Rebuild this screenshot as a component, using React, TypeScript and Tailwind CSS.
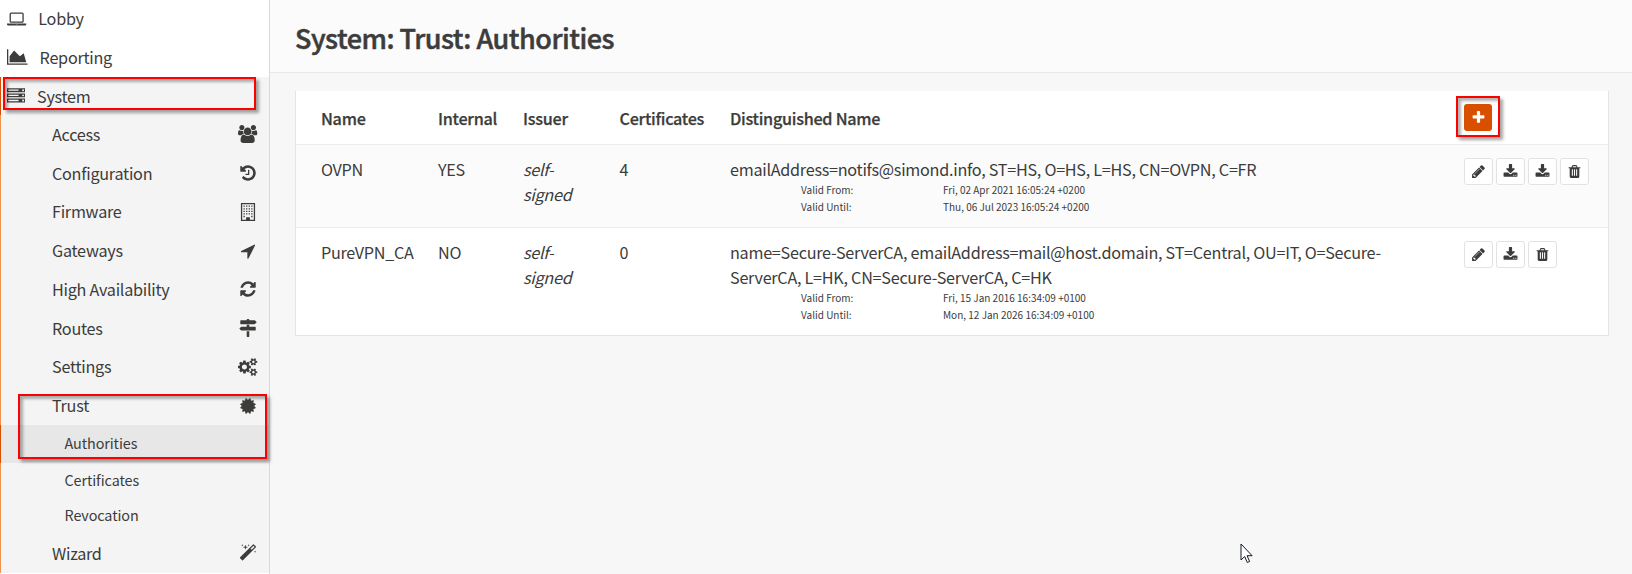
import type { ReactNode } from 'react';

type Glyph = { w: number; d: string };

const glyphs: Record<string, Glyph> = {
  laptop: { w: 1920, d: 'M416 1280q-66 0-113-47t-47-113v-704q0-66 47-113t113-47h1088q66 0 113 47t47 113v704q0 66-47 113t-113 47h-1088zm-32-864v704q0 13 9.500 22.500t22.500 9.500h1088q13 0 22.500-9.500t9.500-22.500v-704q0-13-9.500-22.500t-22.500-9.500h-1088q-13 0-22.500 9.500t-9.500 22.500zm1376 928h160v96q0 40-47 68t-113 28h-1600q-66 0-113-28t-47-68v-96h1760zm-720 96q16 0 16-16t-16-16h-160q-16 0-16 16t16 16h160z' },
  chart: { w: 2048, d: 'M2048 1536v128h-2048v-1536h128v1408h1920zm-384-1024l256 896h-1664v-576l448-576 576 576z' },
  server: { w: 1792, d: 'M128 1408h1024v-128h-1024v128zm0-512h1024v-128h-1024v128zm1568 448q0-40-28-68t-68-28-68 28-28 68 28 68 68 28 68-28 28-68zm-1568-960h1024v-128h-1024v128zm1568 448q0-40-28-68t-68-28-68 28-28 68 28 68 68 28 68-28 28-68zm0-512q0-40-28-68t-68-28-68 28-28 68 28 68 68 28 68-28 28-68zm96 832v384h-1792v-384h1792zm0-512v384h-1792v-384h1792zm0-512v384h-1792v-384h1792z' },
  users: { w: 1920, d: 'M593 896q-162 5-265 128h-134q-82 0-138-40.500t-56-118.500q0-353 124-353 6 0 43.500 21t97.500 42.500 119 21.500q67 0 133-23-5 37-5 66 0 139 81 256zm1071 637q0 120-73 189.500t-194 69.500h-874q-121 0-194-69.500t-73-189.500q0-53 3.500-103.500t14-109 26.500-108.500 43-97.500 62-81 85.500-53.500 111.500-20q10 0 43 21.500t73 48 107 48 135 21.500 135-21.500 107-48 73-48 43-21.500q61 0 111.500 20t85.500 53.500 62 81 43 97.500 26.500 108.500 14 109 3.500 103.500zm-1024-1277q0 106-75 181t-181 75-181-75-75-181 75-181 181-75 181 75 75 181zm704 384q0 159-112.500 271.500t-271.500 112.500-271.500-112.500-112.500-271.500 112.500-271.500 271.500-112.500 271.500 112.500 112.500 271.500zm576 225q0 78-56 118.500t-138 40.500h-134q-103-123-265-128 81-117 81-256 0-29-5-66 66 23 133 23 59 0 119-21.500t97.500-42.500 43.500-21q124 0 124 353zm-128-609q0 106-75 181t-181 75-181-75-75-181 75-181 181-75 181 75 75 181z' },
  history: { w: 1792, d: 'M1664 896q0 156-61 298t-164 245-245 164-298 61q-172 0-327-72.500t-264-204.500q-7-10-6.500-22.500t8.500-20.500l137-138q10-9 25-9 16 2 23 12 73 95 179 147t225 52q104 0 198.500-40.500t163.500-109.500 109.500-163.500 40.500-198.500-40.500-198.500-109.500-163.500-163.500-109.500-198.500-40.500q-98 0-188 35.500t-160 101.500l137 138q31 30 14 69-17 40-59 40h-448q-26 0-45-19t-19-45v-448q0-42 40-59 39-17 69 14l130 129q107-101 244.500-156.500t284.500-55.500q156 0 298 61t245 164 164 245 61 298zm-640-288v448q0 14-9 23t-23 9h-320q-14 0-23-9t-9-23v-64q0-14 9-23t23-9h224v-352q0-14 9-23t23-9h64q14 0 23 9t9 23z' },
  building: { w: 1792, d: 'M192 0h1408v1792h-1408zm128 128v1536h384v-256h384v256h384v-1536zM448 256h128v128h-128zm256 0h128v128h-128zm256 0h128v128h-128zm256 0h128v128h-128zM448 512h128v128h-128zm256 0h128v128h-128zm256 0h128v128h-128zm256 0h128v128h-128zM448 768h128v128h-128zm256 0h128v128h-128zm256 0h128v128h-128zm256 0h128v128h-128zM448 1024h128v128h-128zm256 0h128v128h-128zm256 0h128v128h-128zm256 0h128v128h-128zM448 1280h128v128h-128zm768 0h128v128h-128z' },
  arrow: { w: 1792, d: 'M1593 349l-640 1280q-17 35-57 35-5 0-15-2-22-5-35.500-22.500t-13.500-39.500v-576h-576q-22 0-39.500-13.500t-22.500-35.500 4-42 29-30l1280-640q13-7 29-7 27 0 45 19 15 14 18.500 34.500t-6.500 39.500z' },
  refresh: { w: 1792, d: 'M1639 1056q0 5-1 7-64 268-268 434.500t-478 166.500q-146 0-282.500-55t-243.500-157l-129 129q-19 19-45 19t-45-19-19-45v-448q0-26 19-45t45-19h448q26 0 45 19t19 45-19 45l-137 137q71 66 161 102t187 36q134 0 250-65t186-179q11-17 53-117 8-23 30-23h192q13 0 22.500 9.500t9.500 22.500zm25-800v448q0 26-19 45t-45 19h-448q-26 0-45-19t-19-45 19-45l138-138q-148-137-349-137-134 0-250 65t-186 179q-11 17-53 117-8 23-30 23h-199q-13 0-22.500-9.500t-9.500-22.500v-7q65-268 270-434.500t480-166.500q146 0 284 55.500t245 156.500l130-129q19-19 45-19t45 19 19 45z' },
  signs: { w: 1792, d: 'M1745 297q10 10 10 23t-10 23l-141 141q-28 28-68 28h-1344q-26 0-45-19t-19-45v-256q0-26 19-45t45-19h576v-64q0-26 19-45t45-19h128q26 0 45 19t19 45v64h512q40 0 68 28zm-977 919h256v512q0 26-19 45t-45 19h-128q-26 0-45-19t-19-45v-512zm832-448q26 0 45 19t19 45v256q0 26-19 45t-45 19h-1344q-40 0-68-28l-141-141q-10-10-10-23t10-23l141-141q28-28 68-28h512v-192h256v192h576z' },
  cogs: { w: 1920, d: 'M896 896q0-106-75-181t-181-75-181 75-75 181 75 181 181 75 181-75 75-181zm768 512q0-52-38-90t-90-38-90 38-38 90q0 53 37.500 90.500t90.500 37.500 90.500-37.500 37.500-90.500zm0-1024q0-52-38-90t-90-38-90 38-38 90q0 53 37.500 90.500t90.500 37.500 90.500-37.500 37.500-90.500zm-384 421v185q0 10-7 19.500t-16 10.500l-155 24q-11 35-32 76 34 48 90 115 7 11 7 20 0 12-7 19-23 30-82.500 89.500t-78.500 59.500q-11 0-21-7l-115-90q-37 19-77 31-11 108-23 155-7 24-30 24h-186q-11 0-20-7.500t-10-17.500l-23-153q-34-10-75-31l-118 89q-7 7-20 7-11 0-21-8-144-133-144-160 0-9 7-19 10-14 41-53t47-61q-23-44-35-82l-152-24q-10-1-17-9.500t-7-19.500v-185q0-10 7-19.500t16-10.500l155-24q11-35 32-76-34-48-90-115-7-11-7-20 0-12 7-20 22-30 82-89t79-59q11 0 21 7l115 90q34-18 77-32 11-108 23-154 7-24 30-24h186q11 0 20 7.500t10 17.500l23 153q34 10 75 31l118-89q8-7 20-7 11 0 21 8 144 133 144 160 0 8-7 19-12 16-42 54t-45 60q23 48 34 82l152 23q10 2 17 10.500t7 19.500zm640 533v140q0 16-149 31-12 27-30 52 51 113 51 138 0 4-4 7-122 71-124 71-8 0-46-47t-52-68q-20 2-30 2t-30-2q-14 21-52 68t-46 47q-2 0-124-71-4-3-4-7 0-25 51-138-18-25-30-52-149-15-149-31v-140q0-16 149-31 13-29 30-52-51-113-51-138 0-4 4-7 4-2 35-20t59-34 30-16q8 0 46 46.500t52 67.500q20-2 30-2t30 2q51-71 92-112l6-2q4 0 124 70 4 3 4 7 0 25-51 138 17 23 30 52 149 15 149 31zm0-1024v140q0 16-149 31-12 27-30 52 51 113 51 138 0 4-4 7-122 71-124 71-8 0-46-47t-52-68q-20 2-30 2t-30-2q-14 21-52 68t-46 47q-2 0-124-71-4-3-4-7 0-25 51-138-18-25-30-52-149-15-149-31v-140q0-16 149-31 13-29 30-52-51-113-51-138 0-4 4-7 4-2 35-20t59-34 30-16q8 0 46 46.500t52 67.500q20-2 30-2t30 2q51-71 92-112l6-2q4 0 124 70 4 3 4 7 0 25-51 138 17 23 30 52 149 15 149 31z' },
  certificate: { w: 1792, d: 'M1504 896l138 135q30 28 20 70-12 41-52 51l-188 48 53 186q12 41-19 70-29 31-70 19l-186-53-48 188q-10 40-51 52-12 2-19 2-31 0-51-22l-135-138-135 138q-28 30-70 20-41-11-51-52l-48-188-186 53q-41 12-70-19-31-29-19-70l53-186-188-48q-40-10-52-51-10-42 20-70l138-135-138-135q-30-28-20-70 12-41 52-51l188-48-53-186q-12-41 19-70 29-31 70-19l186 53 48-188q10-41 51-51 41-12 70 19l135 139 135-139q29-30 70-19 41 10 51 51l48 188 186-53q41-12 70 19 31 29 19 70l-53 186 188 48q40 10 52 51 10 42-20 70z' },
  magic: { w: 1792, d: 'M1254 581l293-293-107-107-293 293zm447-293q0 27-18 45l-1286 1286q-18 18-45 18t-45-18l-198-198q-18-18-18-45t18-45l1286-1286q18-18 45-18t45 18l198 198q18 18 18 45zm-1351-190l98 30-98 30-30 98-30-98-98-30 98-30 30-98zm350 162l196 60-196 60-60 196-60-196-196-60 196-60 60-196zm930 478l98 30-98 30-30 98-30-98-98-30 98-30 30-98zm-640-640l98 30-98 30-30 98-30-98-98-30 98-30 30-98z' },
  plus: { w: 1792, d: 'M1600 736v192q0 40-28 68t-68 28h-416v416q0 40-28 68t-68 28h-192q-40 0-68-28t-28-68v-416h-416q-40 0-68-28t-28-68v-192q0-40 28-68t68-28h416v-416q0-40 28-68t68-28h192q40 0 68 28t28 68v416h416q40 0 68 28t28 68z' },
  pencil: { w: 1792, d: 'M491 1536l91-91-235-235-91 91v107h128v128h107zm523-928q0-22-22-22-10 0-17 7l-542 542q-7 7-7 17 0 22 22 22 10 0 17-7l542-542q7-7 7-17zm-54-192l416 416-832 832h-416v-416zm683 96q0 53-37 90l-166 166-416-416 166-165q36-38 90-38 53 0 91 38l235 234q37 39 37 91z' },
  download: { w: 1792, d: 'M1344 1344q0-26-19-45t-45-19-45 19-19 45 19 45 45 19 45-19 19-45zm256 0q0-26-19-45t-45-19-45 19-19 45 19 45 45 19 45-19 19-45zm128-224v320q0 40-28 68t-68 28h-1472q-40 0-68-28t-28-68v-320q0-40 28-68t68-28h465l135 136q58 56 136 56t136-56l136-136h464q40 0 68 28t28 68zm-325-569q17 41-14 70l-448 448q-18 19-45 19t-45-19l-448-448q-31-29-14-70 17-39 59-39h256v-448q0-26 19-45t45-19h256q26 0 45 19t19 45v448h256q42 0 59 39z' },
  trash: { w: 1792, d: 'M704 1376v-704q0-14-9-23t-23-9h-64q-14 0-23 9t-9 23v704q0 14 9 23t23 9h64q14 0 23-9t9-23zm256 0v-704q0-14-9-23t-23-9h-64q-14 0-23 9t-9 23v704q0 14 9 23t23 9h64q14 0 23-9t9-23zm256 0v-704q0-14-9-23t-23-9h-64q-14 0-23 9t-9 23v704q0 14 9 23t23 9h64q14 0 23-9t9-23zm-544-992h448l-48-117q-7-9-17-11h-317q-10 2-17 11zm928 32v64q0 14-9 23t-23 9h-96v948q0 83-47 143.500t-113 60.500h-832q-66 0-113-58.500t-47-141.500v-952h-96q-14 0-23-9t-9-23v-64q0-14 9-23t23-9h309l70-167q15-37 54-63t79-26h320q40 0 79 26t54 63l70 167h309q14 0 23 9t9 23z' },
};

function Icon({ name, size = 18 }: { name: string; size?: number }) {
  const g = glyphs[name];
  return (
    <svg className="shrink-0 overflow-visible" width={(g.w / 1792) * size} height={size} viewBox={`0 0 ${g.w} 1792`} fill="currentColor">
      <path d={g.d} />
    </svg>
  );
}

const systemItems = [
  { label: 'Access', icon: 'users' },
  { label: 'Configuration', icon: 'history' },
  { label: 'Firmware', icon: 'building' },
  { label: 'Gateways', icon: 'arrow' },
  { label: 'High Availability', icon: 'refresh' },
  { label: 'Routes', icon: 'signs' },
  { label: 'Settings', icon: 'cogs' },
  { label: 'Trust', icon: 'certificate' },
];

function SubItem({ label, icon }: { label: string; icon: string }) {
  return (
    <div className="flex h-[38.75px] items-center border-l border-[#f0944d] pl-[51px]">
      <span className="flex-1 pb-px">{label}</span>
      <span className="flex w-[42px] justify-center">
        <Icon name={icon} />
      </span>
    </div>
  );
}

function Sidebar() {
  return (
    <nav className="h-[574px] w-[270px] shrink-0 overflow-hidden border-r border-[#d9d9d9] bg-white text-[16.2px] leading-6 tracking-[-0.26px]">
      <div className="flex h-[37px] items-center gap-[12px] pl-[7px]">
        <Icon name="laptop" />
        <span className="pb-px">Lobby</span>
      </div>
      <div className="flex h-[40px] items-center gap-[12px] pl-[7px]">
        <Icon name="chart" />
        Reporting
      </div>
      <div className="bg-[#f4f4f4]">
        <div className="flex h-[38px] items-center gap-[12px] border-l border-[#d94f00] pl-[6px]">
          <Icon name="server" />
          System
        </div>
        {systemItems.map((item) => (
          <SubItem key={item.label} {...item} />
        ))}
        <div className="text-[14.4px] tracking-[-0.1px]">
          <div className="flex h-[38px] items-center border-l border-[#d94f00] bg-[#e7e7e7] pb-[2px] pl-[63.5px]">Authorities</div>
          <div className="flex h-[35.5px] items-center border-l border-[#f0944d] pb-[2px] pl-[63.5px]">Certificates</div>
          <div className="flex h-[35.5px] items-center border-l border-[#f0944d] pb-[2px] pl-[63.5px]">Revocation</div>
        </div>
        <SubItem label="Wizard" icon="magic" />
      </div>
    </nav>
  );
}

function IconButton({ icon }: { icon: string }) {
  return (
    <button className="flex h-[27px] w-[28.5px] items-center justify-center rounded-[3px] border border-[#e2e2e2] bg-white">
      <Icon name={icon} size={15} />
    </button>
  );
}

type Authority = {
  name: string;
  internal: string;
  count: number;
  dn: string;
  from: string;
  until: string;
  actions: string[];
};

const authorities: Authority[] = [
  {
    name: 'OVPN',
    internal: 'YES',
    count: 4,
    dn: 'emailAddress=notifs@simond.info, ST=HS, O=HS, L=HS, CN=OVPN, C=FR',
    from: 'Fri, 02 Apr 2021 16:05:24 +0200',
    until: 'Thu, 06 Jul 2023 16:05:24 +0200',
    actions: ['pencil', 'download', 'download', 'trash'],
  },
  {
    name: 'PureVPN_CA',
    internal: 'NO',
    count: 0,
    dn: 'name=Secure-ServerCA, emailAddress=mail@host.domain, ST=Central, OU=IT, O=Secure-ServerCA, L=HK, CN=Secure-ServerCA, C=HK',
    from: 'Fri, 15 Jan 2016 16:34:09 +0100',
    until: 'Mon, 12 Jan 2026 16:34:09 +0100',
    actions: ['pencil', 'download', 'trash'],
  },
];

function Row({ children, className }: { children: ReactNode; className: string }) {
  return (
    <div className={`grid grid-cols-[117px_85px_96.5px_110.5px_734px_1fr] pl-[25px] ${className}`}>{children}</div>
  );
}

function AuthorityRow({ item, className }: { item: Authority; className: string }) {
  return (
    <Row className={className}>
      <span>{item.name}</span>
      <span>{item.internal}</span>
      <span className="w-[60px] italic">self-signed</span>
      <span>{item.count}</span>
      <div>
        <div className="w-[665px]">{item.dn}</div>
        <div className="grid grid-cols-[142px_1fr] pl-[71px] text-[10px] leading-[16.5px] tracking-normal">
          <span>Valid From:</span>
          <span>{item.from}</span>
          <span>Valid Until:</span>
          <span>{item.until}</span>
        </div>
      </div>
      <div className="flex gap-[3.5px] pt-px">
        {item.actions.map((icon, i) => (
          <IconButton key={i} icon={icon} />
        ))}
      </div>
    </Row>
  );
}

function Highlight({ className }: { className: string }) {
  return (
    <div
      className={`pointer-events-none absolute border-2 border-[#fe0000] shadow-[3px_3px_3px_rgba(0,0,0,0.35),inset_3px_3px_3px_rgba(0,0,0,0.3)] ${className}`}
    />
  );
}

export default function App() {
  return (
    <div className="relative flex h-[574px] w-[1632px] overflow-hidden bg-[#f7f7f7] font-['Noto_Sans_CJK_SC',sans-serif] text-[#3c3c3b]">
      <Sidebar />
      <main className="flex-1">
        <header className="flex h-[73px] items-center border-b border-[#e7e7e7] bg-[#fbfbfb] pl-[25px] pt-[3px]">
          <h1 className="text-[27px] leading-9 font-medium tracking-[-0.5px] whitespace-nowrap [-webkit-text-stroke:0.5px_#3c3c3b]">System: Trust: Authorities</h1>
        </header>
        <section className="mt-[18px] ml-[25px] h-[245px] w-[1314px] border-x border-b border-[#e4e4e4] bg-white text-[16.2px] leading-[25px] tracking-[-0.27px]">
          <Row className="h-[53px] items-center pt-px font-medium [-webkit-text-stroke:0.25px_#3c3c3b]">
            <span>Name</span>
            <span>Internal</span>
            <span>Issuer</span>
            <span>Certificates</span>
            <span>Distinguished Name</span>
            <button className="mb-px flex h-[27px] w-[28px] items-center justify-center rounded-[3px] bg-[#d94f00] text-white">
              <Icon name="plus" size={15} />
            </button>
          </Row>
          <AuthorityRow item={authorities[0]} className="h-[83px] border-t border-[#ececec] bg-[#fbfbfb] pt-[12px]" />
          <AuthorityRow item={authorities[1]} className="h-[108px] border-t border-[#ececec] pt-[12px]" />
        </section>
      </main>
      <Highlight className="top-[77px] left-[3px] h-[33px] w-[253px]" />
      <Highlight className="top-[394px] left-[18px] h-[65px] w-[249px]" />
      <Highlight className="top-[96px] left-[1456px] h-[41px] w-[44px]" />
      <svg className="absolute top-[543px] left-[1240px]" width="13" height="21" viewBox="0 0 13 21">
        <path d="M1 1v16l3.700-3.500 2.600 6 2.300-1-2.500-5.800h5z" fill="#fff" stroke="#111827" strokeWidth="1" />
      </svg>
    </div>
  );
}
